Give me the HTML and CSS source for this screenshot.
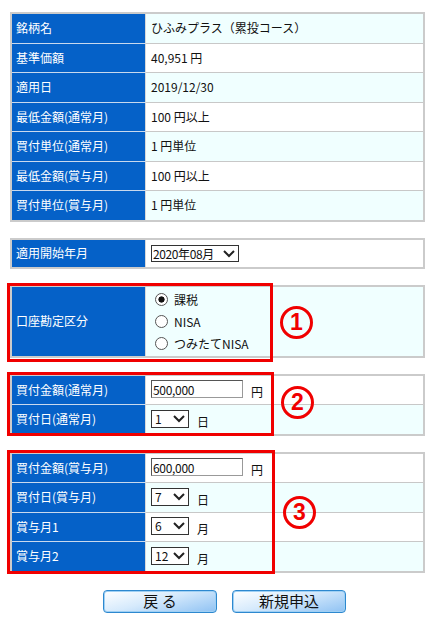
FILE: index.html
```html
<!DOCTYPE html>
<html lang="ja">
<head>
    <meta charset="UTF-8">
    <meta name="viewport" content="width=device-width, initial-scale=1.0">
    <title>積立設定</title>
    <link rel="stylesheet" href="styles.css">
</head>
<body>
    <div class="page">
        <table class="info">
            <tr><th>銘柄名</th><td class="alt">ひふみプラス（累投コース）</td></tr>
            <tr><th>基準価額</th><td>40,951 円</td></tr>
            <tr><th>適用日</th><td class="alt">2019/12/30</td></tr>
            <tr><th>最低金額(通常月)</th><td>100 円以上</td></tr>
            <tr><th>買付単位(通常月)</th><td class="alt">1 円単位</td></tr>
            <tr><th>最低金額(賞与月)</th><td>100 円以上</td></tr>
            <tr><th>買付単位(賞与月)</th><td class="alt">1 円単位</td></tr>
        </table>

        <table class="info single">
            <tr>
                <th>適用開始年月</th>
                <td>
                    <span class="select wide">
                        <select><option>2020年08月</option></select>
                        <svg width="12" height="8" viewBox="0 0 12 8"><polyline points="1,1 6,6 11,1" fill="none" stroke="#222" stroke-width="2"/></svg>
                    </span>
                </td>
            </tr>
        </table>

        <div class="marked">
            <table class="info">
                <tr>
                    <th class="tall">口座勘定区分</th>
                    <td class="alt">
                        <div class="radios">
                            <label><input type="radio" name="acct" checked>課税</label>
                            <label><input type="radio" name="acct">NISA</label>
                            <label><input type="radio" name="acct">つみたてNISA</label>
                        </div>
                    </td>
                </tr>
            </table>
            <div class="frame frame-1"></div>
            <div class="num num-1">1</div>
        </div>

        <div class="marked">
            <table class="info">
                <tr>
                    <th>買付金額(通常月)</th>
                    <td><input type="text" class="amount" value="500,000"><span class="unit">円</span></td>
                </tr>
                <tr>
                    <th>買付日(通常月)</th>
                    <td class="alt">
                        <span class="select">
                            <select><option>1</option></select>
                            <svg width="12" height="8" viewBox="0 0 12 8"><polyline points="1,1 6,6 11,1" fill="none" stroke="#222" stroke-width="2"/></svg>
                        </span><span class="unit">日</span>
                    </td>
                </tr>
            </table>
            <div class="frame frame-2"></div>
            <div class="num num-2">2</div>
        </div>

        <div class="marked">
            <table class="info">
                <tr>
                    <th>買付金額(賞与月)</th>
                    <td><input type="text" class="amount" value="600,000"><span class="unit">円</span></td>
                </tr>
                <tr>
                    <th>買付日(賞与月)</th>
                    <td class="alt">
                        <span class="select">
                            <select><option>7</option></select>
                            <svg width="12" height="8" viewBox="0 0 12 8"><polyline points="1,1 6,6 11,1" fill="none" stroke="#222" stroke-width="2"/></svg>
                        </span><span class="unit">日</span>
                    </td>
                </tr>
                <tr>
                    <th>賞与月1</th>
                    <td>
                        <span class="select">
                            <select><option>6</option></select>
                            <svg width="12" height="8" viewBox="0 0 12 8"><polyline points="1,1 6,6 11,1" fill="none" stroke="#222" stroke-width="2"/></svg>
                        </span><span class="unit">月</span>
                    </td>
                </tr>
                <tr>
                    <th>賞与月2</th>
                    <td class="alt">
                        <span class="select">
                            <select><option>12</option></select>
                            <svg width="12" height="8" viewBox="0 0 12 8"><polyline points="1,1 6,6 11,1" fill="none" stroke="#222" stroke-width="2"/></svg>
                        </span><span class="unit">月</span>
                    </td>
                </tr>
            </table>
            <div class="frame frame-3"></div>
            <div class="num num-3">3</div>
        </div>

        <div class="buttons">
            <button type="button" class="btn">戻 る</button>
            <button type="button" class="btn">新規申込</button>
        </div>
    </div>
</body>
</html>
```

FILE: styles.css
```css
body {
    margin: 0;
    font-family: "Noto Sans CJK JP", "Noto Sans", sans-serif;
    font-size: 12px;
    color: #111;
    background-color: #ffffff;
}
.page {
    padding: 12px 0 0 10px;
}
.info {
    width: 415px;
    border-collapse: separate;
    border-spacing: 0;
    border: 2px solid #cbcbcb;
    margin-bottom: 16px;
}
.info th, .info td {
    height: 28.5px;
    padding: 0;
    text-align: left;
    font-weight: normal;
    line-height: 14px;
}
.info th {
    width: 129px;
    padding-left: 4px;
    background-color: #0561c8;
    color: #ffffff;
    border-right: 1px solid #d8d8d8;
}
.info td {
    padding-left: 5px;
    background-color: #ffffff;
}
.info td.alt {
    background-color: #f0ffff;
}
.info tr + tr th {
    border-top: 1px solid #c9d9ee;
}
.info tr + tr td {
    border-top: 1px solid #c8c8c8;
}
.info.single th, .info.single td {
    height: 27px;
}
.info th.tall {
    height: 69px;
}

/* form controls */
.select {
    position: relative;
    display: inline-block;
    vertical-align: middle;
}
.select select {
    appearance: none;
    -webkit-appearance: none;
    width: 38px;
    height: 18px;
    margin: 0;
    padding: 0 0 0 3px;
    border: 1px solid #333;
    border-radius: 0;
    background: #ffffff;
    font-family: inherit;
    font-size: 12px;
    line-height: 16px;
    color: #111;
}
.select.wide select {
    width: 88px;
    height: 17px;
    padding-left: 1px;
    letter-spacing: -0.4px;
}
.select svg {
    position: absolute;
    right: 4px;
    top: 5px;
    pointer-events: none;
}
.amount {
    width: 92px;
    height: 18px;
    box-sizing: border-box;
    margin: 0;
    padding: 0 1px;
    border: 1px solid #555;
    border-right-color: #999;
    border-bottom-color: #999;
    font-family: inherit;
    font-size: 12px;
    color: #111;
    vertical-align: middle;
    letter-spacing: -0.3px;
}
.unit {
    margin-left: 8px;
    vertical-align: -5px;
}
.radios {
    display: flex;
    flex-direction: column;
    gap: 8px;
    padding: 1px 0 0;
}
.radios label {
    display: flex;
    align-items: center;
    height: 14px;
}
.radios input {
    appearance: none;
    -webkit-appearance: none;
    width: 13px;
    height: 13px;
    margin: 0 6px 0 4px;
    border: 1px solid #555;
    border-radius: 50%;
    background: #ffffff;
}
.radios input:checked {
    background: radial-gradient(circle, #111 0 2.8px, #ffffff 3.4px);
}

/* annotation marks */
.marked {
    position: relative;
    width: 419px;
}
.frame {
    position: absolute;
    box-sizing: border-box;
    border: 3px solid #f00000;
}
.frame-1 {
    left: -3px;
    top: -2px;
    width: 266px;
    height: 79px;
}
.frame-2 {
    left: -3px;
    top: -2px;
    width: 267px;
    height: 64px;
}
.frame-3 {
    left: -3px;
    top: -2px;
    width: 268px;
    height: 124px;
}
.num {
    position: absolute;
    box-sizing: border-box;
    width: 33px;
    height: 33px;
    border: 3px solid #f00000;
    border-radius: 50%;
    color: #f00000;
    font-family: "Liberation Sans", sans-serif;
    font-weight: bold;
    font-size: 23px;
    line-height: 27px;
    text-align: center;
}
.num-1 {
    left: 270px;
    top: 21px;
}
.num-2 {
    left: 271px;
    top: 12px;
}
.num-3 {
    left: 273px;
    top: 44px;
}

.buttons {
    display: flex;
    gap: 15px;
    margin: 17px 0 0 93px;
}
.btn {
    width: 114px;
    height: 23px;
    padding: 0;
    border: 1px solid #2d88cf;
    border-radius: 4px;
    background: linear-gradient(165deg, #ffffff 0%, #d6eafc 45%, #8fc2f3 100%);
    box-shadow: inset 0 0 0 1px #9fd0f4;
    font-family: "Noto Sans CJK JP", sans-serif;
    font-size: 15px;
    line-height: 20px;
    color: #111;
    cursor: pointer;
}
```
